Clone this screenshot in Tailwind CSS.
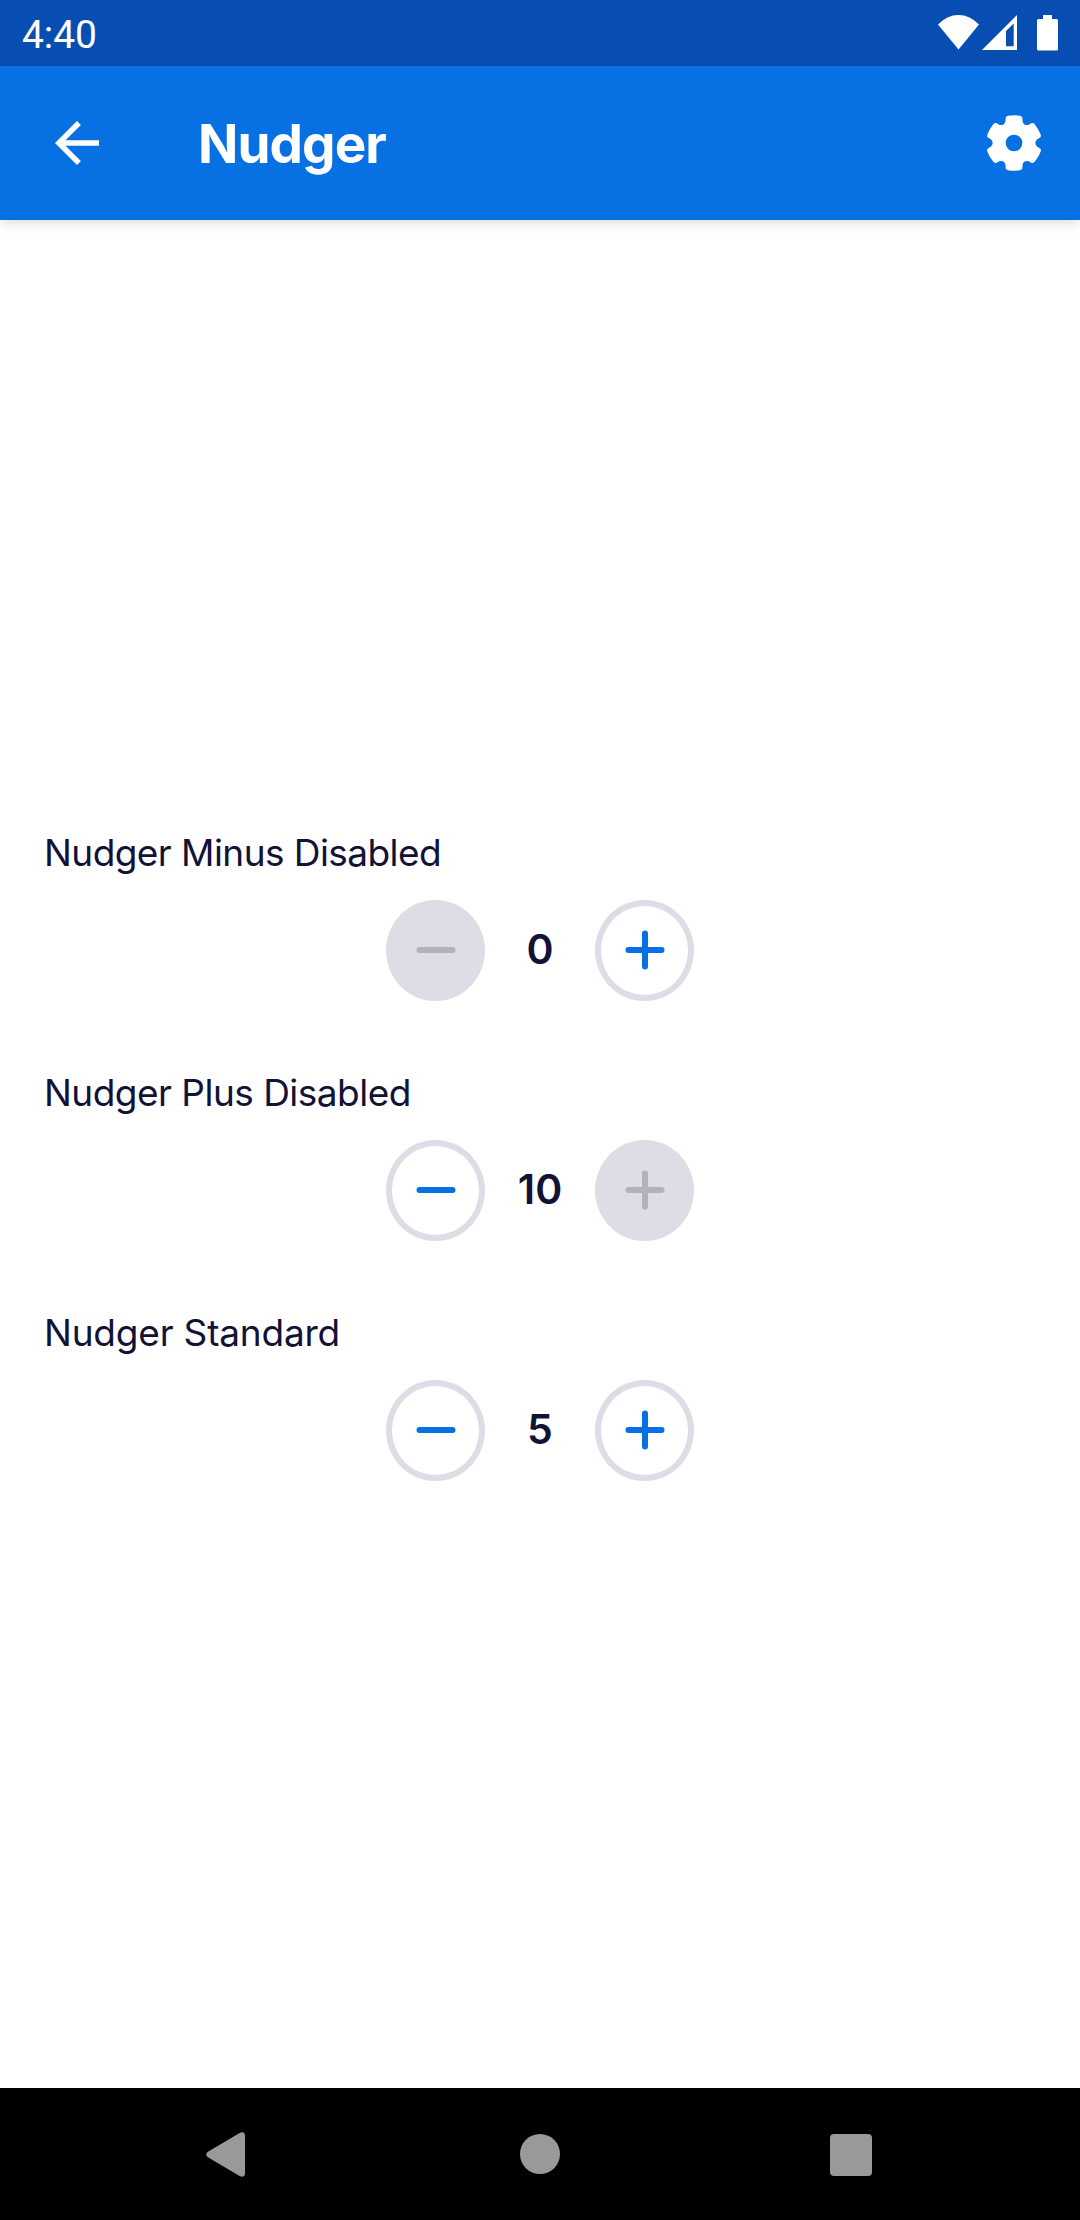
<!DOCTYPE html>
<html lang="en">
<head>
<meta charset="utf-8">
<title>Nudger</title>
<script src="https://cdn.jsdelivr.net/npm/@tailwindcss/browser@4"></script>
</head>
<body class="w-[1080px] h-[2220px] flex flex-col bg-white font-['Inter',sans-serif] text-[#111236] overflow-hidden">
  <!-- Status bar -->
  <header class="relative z-10 h-[66px] shrink-0 bg-[#084db2] flex items-center justify-between pl-[22px] text-white">
    <span class="font-['Roboto',sans-serif] text-[39px] leading-[66px] tracking-[-0.1px] pt-[3px]">4:40</span>
    <svg class="w-[160px] h-[66px]" viewBox="0 0 160 66" fill="currentColor">
      <path d="M38.500 49.500 18 24.500Q27 15 38.500 15T59 24.500Z"/>
      <path fill-rule="evenodd" d="M62 50 97 15V50ZM86 46.300H93.700V23.500L86 31Z"/>
      <path d="M123 15h9v4h4.500a1.500 1.500 0 0 1 1.500 1.500v28.500a1.500 1.500 0 0 1-1.500 1.500h-18a1.500 1.500 0 0 1-1.500-1.500V20.500a1.500 1.500 0 0 1 1.500-1.500H123Z"/>
    </svg>
  </header>

  <!-- App bar -->
  <nav class="h-[154px] shrink-0 bg-[#0770e3] flex items-center text-white pl-[44px] pr-[38px] shadow-[0_3px_12px_rgba(0,0,0,0.14)]">
    <svg class="w-[66px] h-[66px]" viewBox="0 0 24 24" fill="currentColor"><path d="M20 11H7.830l5.590-5.590L12 4l-8 8 8 8 1.410-1.410L7.830 13H20v-2z"/></svg>
    <h1 class="ml-[88px] mt-px text-[53px] leading-[80px] font-bold tracking-[-0.9px]">Nudger</h1>
    <svg class="ml-auto w-[56px] h-[56px]" viewBox="-84 -84 168 168" fill="currentColor">
      <defs><path id="tooth" d="M0 0-32-55.400Q-26-59-25.500-66L-25-76Q-24-81-18-82Q0-85 18-82Q24-81 25-76L25.500-66Q26-59 32-55.400Z"/></defs>
      <use href="#tooth"/><use href="#tooth" transform="rotate(60)"/><use href="#tooth" transform="rotate(120)"/><use href="#tooth" transform="rotate(180)"/><use href="#tooth" transform="rotate(240)"/><use href="#tooth" transform="rotate(300)"/>
      <circle r="62"/><circle r="25" fill="#0770e3"/>
    </svg>
  </nav>

  <!-- Nudgers -->
  <main class="flex-1 flex flex-col gap-[64px] pt-[605px]">
    <section>
      <h2 class="pl-[44px] h-[75px] text-[37px] leading-[56px] tracking-[-0.56px]">Nudger Minus Disabled</h2>
      <div class="flex justify-center">
        <button class="w-[99px] h-[101px] rounded-[50%] bg-[#dddde5] text-[#b2b1be] flex items-center justify-center"><svg class="w-[40px] h-[40px] mb-px" viewBox="0 0 40 40" fill="none" stroke="currentColor" stroke-width="6" stroke-linecap="round"><path d="M3.500 20h33"/></svg></button>
        <output class="w-[110px] text-center text-[41px] leading-[99px] font-semibold">0</output>
        <button class="w-[99px] h-[101px] rounded-[50%] border-[6px] border-[#dddde5] text-[#0770e3] flex items-center justify-center"><svg class="w-[40px] h-[40px] mb-px" viewBox="0 0 40 40" fill="none" stroke="currentColor" stroke-width="6" stroke-linecap="round"><path d="M3.500 20h33M20 3.500v33"/></svg></button>
      </div>
    </section>
    <section>
      <h2 class="pl-[44px] h-[75px] text-[37px] leading-[56px] tracking-[-0.52px]">Nudger Plus Disabled</h2>
      <div class="flex justify-center">
        <button class="w-[99px] h-[101px] rounded-[50%] border-[6px] border-[#dddde5] text-[#0770e3] flex items-center justify-center"><svg class="w-[40px] h-[40px] mb-px" viewBox="0 0 40 40" fill="none" stroke="currentColor" stroke-width="6" stroke-linecap="round"><path d="M3.500 20h33"/></svg></button>
        <output class="w-[110px] text-center text-[41px] leading-[99px] font-semibold">10</output>
        <button class="w-[99px] h-[101px] rounded-[50%] bg-[#dddde5] text-[#b2b1be] flex items-center justify-center"><svg class="w-[40px] h-[40px] mb-px" viewBox="0 0 40 40" fill="none" stroke="currentColor" stroke-width="6" stroke-linecap="round"><path d="M3.500 20h33M20 3.500v33"/></svg></button>
      </div>
    </section>
    <section>
      <h2 class="pl-[44px] h-[75px] text-[37px] leading-[56px] tracking-[-0.2px]">Nudger Standard</h2>
      <div class="flex justify-center">
        <button class="w-[99px] h-[101px] rounded-[50%] border-[6px] border-[#dddde5] text-[#0770e3] flex items-center justify-center"><svg class="w-[40px] h-[40px] mb-px" viewBox="0 0 40 40" fill="none" stroke="currentColor" stroke-width="6" stroke-linecap="round"><path d="M3.500 20h33"/></svg></button>
        <output class="w-[110px] text-center text-[41px] leading-[99px] font-semibold">5</output>
        <button class="w-[99px] h-[101px] rounded-[50%] border-[6px] border-[#dddde5] text-[#0770e3] flex items-center justify-center"><svg class="w-[40px] h-[40px] mb-px" viewBox="0 0 40 40" fill="none" stroke="currentColor" stroke-width="6" stroke-linecap="round"><path d="M3.500 20h33M20 3.500v33"/></svg></button>
      </div>
    </section>
  </main>

  <!-- System navigation -->
  <footer class="h-[132px] shrink-0 bg-black flex items-start pt-[44px] pl-[206px] text-[#999999]">
    <svg class="w-[39px] h-[45px]" viewBox="0 0 39 45" fill="currentColor"><path d="M1.500 20 34 .700Q39-1 39 4V41Q39 46 34 44.300L1.500 25Q-1 22.500 1.500 20Z"/></svg>
    <span class="ml-[275px] mt-[2px] w-[40px] h-[40px] rounded-full bg-[#999999]"></span>
    <span class="ml-[270px] mt-[2px] w-[41.500px] h-[41.500px] rounded-[4px] bg-[#999999]"></span>
  </footer>
</body>
</html>
